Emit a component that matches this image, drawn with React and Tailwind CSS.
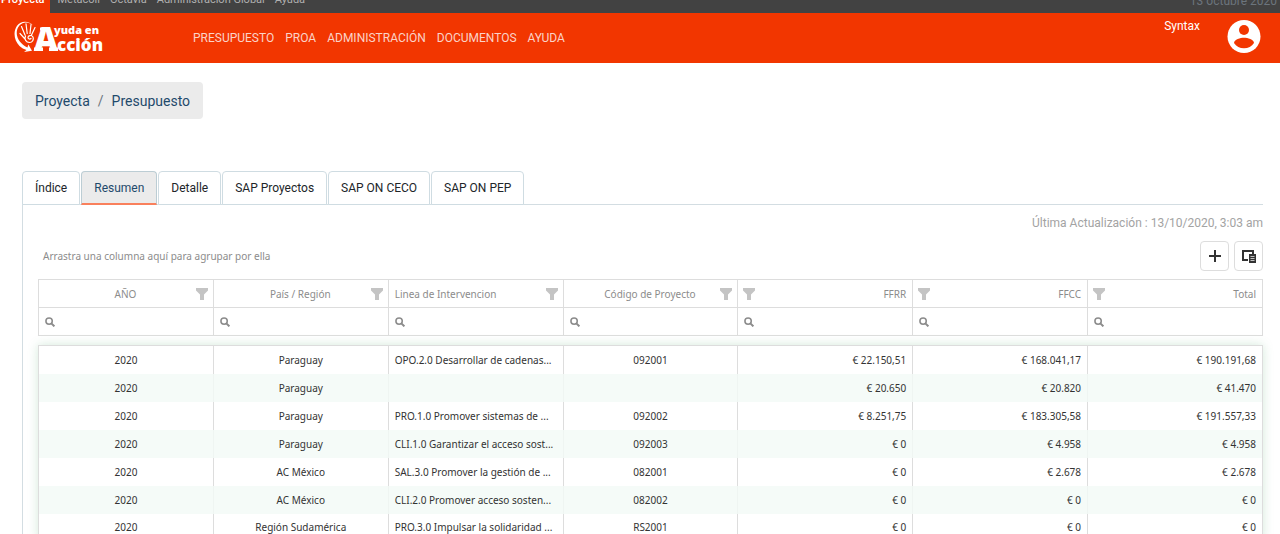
import React from "react";

const topLinks = ["Metacoll", "Octavia", "Administración Global", "Ayuda"];
const navLinks = ["PRESUPUESTO", "PROA", "ADMINISTRACIÓN", "DOCUMENTOS", "AYUDA"];
const tabs = ["Índice", "Resumen", "Detalle", "SAP Proyectos", "SAP ON CECO", "SAP ON PEP"];

const columns = [
  { title: "AÑO", align: "center" },
  { title: "País / Región", align: "center" },
  { title: "Linea de Intervencion", align: "left" },
  { title: "Código de Proyecto", align: "center" },
  { title: "FFRR", align: "right" },
  { title: "FFCC", align: "right" },
  { title: "Total", align: "right" },
];

const rows = [
  ["2020", "Paraguay", "OPO.2.0 Desarrollar de cadenas...", "092001", "€ 22.150,51", "€ 168.041,17", "€ 190.191,68"],
  ["2020", "Paraguay", "", "", "€ 20.650", "€ 20.820", "€ 41.470"],
  ["2020", "Paraguay", "PRO.1.0 Promover sistemas de ...", "092002", "€ 8.251,75", "€ 183.305,58", "€ 191.557,33"],
  ["2020", "Paraguay", "CLI.1.0 Garantizar el acceso sost...", "092003", "€ 0", "€ 4.958", "€ 4.958"],
  ["2020", "AC México", "SAL.3.0 Promover la gestión de ...", "082001", "€ 0", "€ 2.678", "€ 2.678"],
  ["2020", "AC México", "CLI.2.0 Promover acceso sosten...", "082002", "€ 0", "€ 0", "€ 0"],
  ["2020", "Región Sudamérica", "PRO.3.0 Impulsar la solidaridad ...", "RS2001", "€ 0", "€ 0", "€ 0"],
];

const alignText = { center: "text-center", left: "text-left", right: "text-right" };

function Logo() {
  return (
    <svg width="92" height="36" viewBox="0 0 92 36" fill="#fff" role="img" aria-label="Ayuda en Acción">
      <path d="M19 5.500C15 .6 7 .4 3 5.700-1.200 12 .2 20.500 5.500 26c2 2 4.500 3.300 7 4l-2.500 2 8-1.200-3.700-6.300-.8 3C9.500 25.500 4.300 21.500 3 15.500 1.900 9.800 4.500 5 8.500 3.200c3.700-1.500 7.500-.4 10.500 2.300z" />
      <path
        d="M7.500 6.500l3.500 8.500M12 3.800l1.200 9.700M17 4.500l-1 9M21 7.500l-3.500 7.500M6 13.500l5 5.500M11.500 16c-1.500 3 .5 6.500 4 6.500 3 0 4.500-3 3.500-5.500-1.500-2.500-5-1.500-5 .5 0 1.500 2 2 3 1"
        fill="none"
        stroke="#fff"
        strokeWidth="1.200"
        strokeLinecap="round"
      />
      <text x="20" y="31" fontFamily="Open Sans, sans-serif" fontWeight="800" fontSize="33">A</text>
      <path d="M26 7.500h9v3h-9zM20 27.500h9v3.500h-9zM35 27.500h9v3.500h-9z" />
      <text x="40" y="14" fontFamily="Open Sans, sans-serif" fontWeight="800" fontSize="11">yuda en</text>
      <text x="43" y="31" fontFamily="Open Sans, sans-serif" fontWeight="800" fontSize="17">cción</text>
    </svg>
  );
}

function FilterIcon() {
  return (
    <svg width="12" height="12" viewBox="0 0 12 12" fill="#c4c4c4" aria-hidden="true">
      <path d="M0 0h12v2.500L8 6.500V12H4V6.500L0 2.500z" />
    </svg>
  );
}

function SearchIcon() {
  return (
    <svg className="shrink-0" width="10" height="10" viewBox="0 0 11 11" fill="none" stroke="#8c8c8c" aria-hidden="true">
      <circle cx="4.500" cy="4.500" r="3.500" strokeWidth="1.700" />
      <path d="M7 7l3.300 3.300" strokeWidth="2.200" />
    </svg>
  );
}

function HeaderCell({ title, align }) {
  const filter = (
    <button type="button" aria-label={"Filtrar " + title} className="flex shrink-0 items-center">
      <FilterIcon />
    </button>
  );
  return (
    <th scope="col" className="h-7 border border-[#dddddd] p-0 font-normal">
      <div className="flex items-center px-[5px]">
        {align === "right" && filter}
        <span className={"flex-1 px-px " + alignText[align] + (align === "center" ? " pl-3" : "")}>{title}</span>
        {align !== "right" && filter}
      </div>
    </th>
  );
}

export default function App() {
  return (
    <div className="h-screen overflow-hidden bg-white font-['Roboto',sans-serif] text-[#333333]">
      <div className="flex h-[13px] items-end justify-between overflow-hidden bg-[#424242] text-[11px] leading-4">
        <nav aria-label="Aplicaciones" className="flex items-end text-[#b0b0b0]">
          <a href="#proyecta" className="bg-[#f23600] pr-[6px] pb-[5px] pl-px font-medium text-white">Proyecta</a>
          <div className="flex gap-[10px] pb-[5px] pl-[7px]">
            {topLinks.map((l) => (
              <a key={l} href="#app">{l}</a>
            ))}
          </div>
        </nav>
        <span className="pr-[3px] pb-1 text-xs leading-4 text-[#6c757d]">13 octubre 2020</span>
      </div>

      <header className="flex h-[50px] items-center bg-[#f23600] pl-[14px] pr-[18px]">
        <a href="#inicio" className="w-[179px] shrink-0">
          <Logo />
        </a>
        <nav aria-label="Principal" className="flex flex-1 gap-[11px] text-xs text-[#fbd3c8]">
          {navLinks.map((l) => (
            <a key={l} href="#menu">{l}</a>
          ))}
        </nav>
        <span className="self-start pt-1 pr-[26px] text-xs leading-[18px] text-white">Syntax</span>
        <button type="button" aria-label="Cuenta de usuario">
          <svg className="block" width="36" height="36" viewBox="0 0 36 36" aria-hidden="true">
            <circle cx="18" cy="16.500" r="16.500" fill="#fff" />
            <circle cx="18" cy="10" r="5" fill="#f23600" />
            <path d="M8 23c0-3.300 6.500-5.200 10-5.200s10 1.900 10 5.200c-2.200 3.300-5.800 5.300-10 5.300s-7.800-2-10-5.300z" fill="#f23600" />
          </svg>
        </button>
      </header>

      <main className="pr-[17px] pl-[22px]">
        <nav aria-label="Ruta" className="mt-[19px] flex h-[37px] w-fit items-center gap-2 rounded bg-[#ebebeb] px-[13px] text-sm text-[#1f4a6b]">
          <a href="#proyecta">Proyecta</a>
          <span className="text-[#6c757d]">/</span>
          <a href="#presupuesto">Presupuesto</a>
        </nav>

        <div role="tablist" className="mt-[52px] flex gap-px border-b border-[#d3dde2] text-xs text-[#212529]">
          {tabs.map((t) => (
            <button
              key={t}
              type="button"
              role="tab"
              aria-selected={t === "Resumen"}
              className={
                "-mb-px h-[34px] rounded-t border px-3 " +
                (t === "Resumen"
                  ? "border-[#bccdd4] border-b-2 border-b-[#f9805c] bg-[#ebebeb] text-[#1f4a6b]"
                  : "border-[#cfdce2] bg-white")
              }
            >
              {t}
            </button>
          ))}
        </div>

        <section className="border-l border-[#d3dde2] pl-[15px]">
          <p className="pt-2 text-right text-xs leading-5 text-[#a3a3a3]">Última Actualización : 13/10/2020, 3:03 am</p>

          <div className="flex items-center justify-between py-2 font-['Noto_Sans',sans-serif] text-[10px]">
            <span className="pl-[5px] text-[#8c8c8c]">Arrastra una columna aquí para agrupar por ella</span>
            <div className="flex gap-[5px]">
              <button type="button" aria-label="Añadir fila" className="flex h-[30px] w-[29px] items-center justify-center rounded border border-[#dddddd]">
                <svg width="12" height="12" viewBox="0 0 12 12" stroke="#333" strokeWidth="2" aria-hidden="true">
                  <path d="M6 0v12M0 6h12" />
                </svg>
              </button>
              <button type="button" aria-label="Selector de columnas" className="flex h-[30px] w-[29px] items-center justify-center rounded border border-[#dddddd]">
                <svg width="14" height="13" viewBox="0 0 14 13" aria-hidden="true">
                  <path d="M6 10H1V1h10v3" fill="none" stroke="#333" strokeWidth="2" />
                  <path d="M7 4h7v9H7z" fill="#333" />
                  <path d="M8.500 6.500h4M8.500 8.500h4M8.500 10.500h4" stroke="#fff" strokeWidth=".7" />
                </svg>
              </button>
            </div>
          </div>

          <div className="font-['Noto_Sans',sans-serif] text-[10px] leading-4">
            <table className="w-full table-fixed border-collapse text-[#8c8c8c]">
              <thead>
                <tr>
                  {columns.map((c) => (
                    <HeaderCell key={c.title} title={c.title} align={c.align} />
                  ))}
                </tr>
                <tr>
                  {columns.map((c) => (
                    <td key={c.title} className="h-7 border border-[#dddddd] p-0">
                      <label className="flex items-center gap-1 px-[6px]">
                        <SearchIcon />
                        <input type="text" aria-label={"Buscar en " + c.title} className="h-5 w-full min-w-0 outline-none" />
                      </label>
                    </td>
                  ))}
                </tr>
              </thead>
            </table>

            <div className="mt-[9px] shadow-[0_0_10px_rgba(60,160,90,0.22)]">
              <table aria-label="Resumen de presupuesto" className="w-full table-fixed border-collapse border border-[#dddddd] bg-white">
                <tbody>
                  {rows.map((r, i) => (
                    <tr key={i} className={i % 2 ? "bg-[#f5fbf8]" : "bg-white"}>
                      {r.map((v, j) => (
                        <td
                          key={j}
                          className={
                            "h-7 truncate border-x px-[6px] py-0 first:border-l-[#dddddd] last:border-r-[#dddddd] " +
                            (i % 2 ? "border-x-[#eff5f2] " : "border-x-[#dddddd] ") +
                            alignText[columns[j].align]
                          }
                        >
                          {v}
                        </td>
                      ))}
                    </tr>
                  ))}
                </tbody>
              </table>
            </div>
          </div>
        </section>
      </main>
    </div>
  );
}
